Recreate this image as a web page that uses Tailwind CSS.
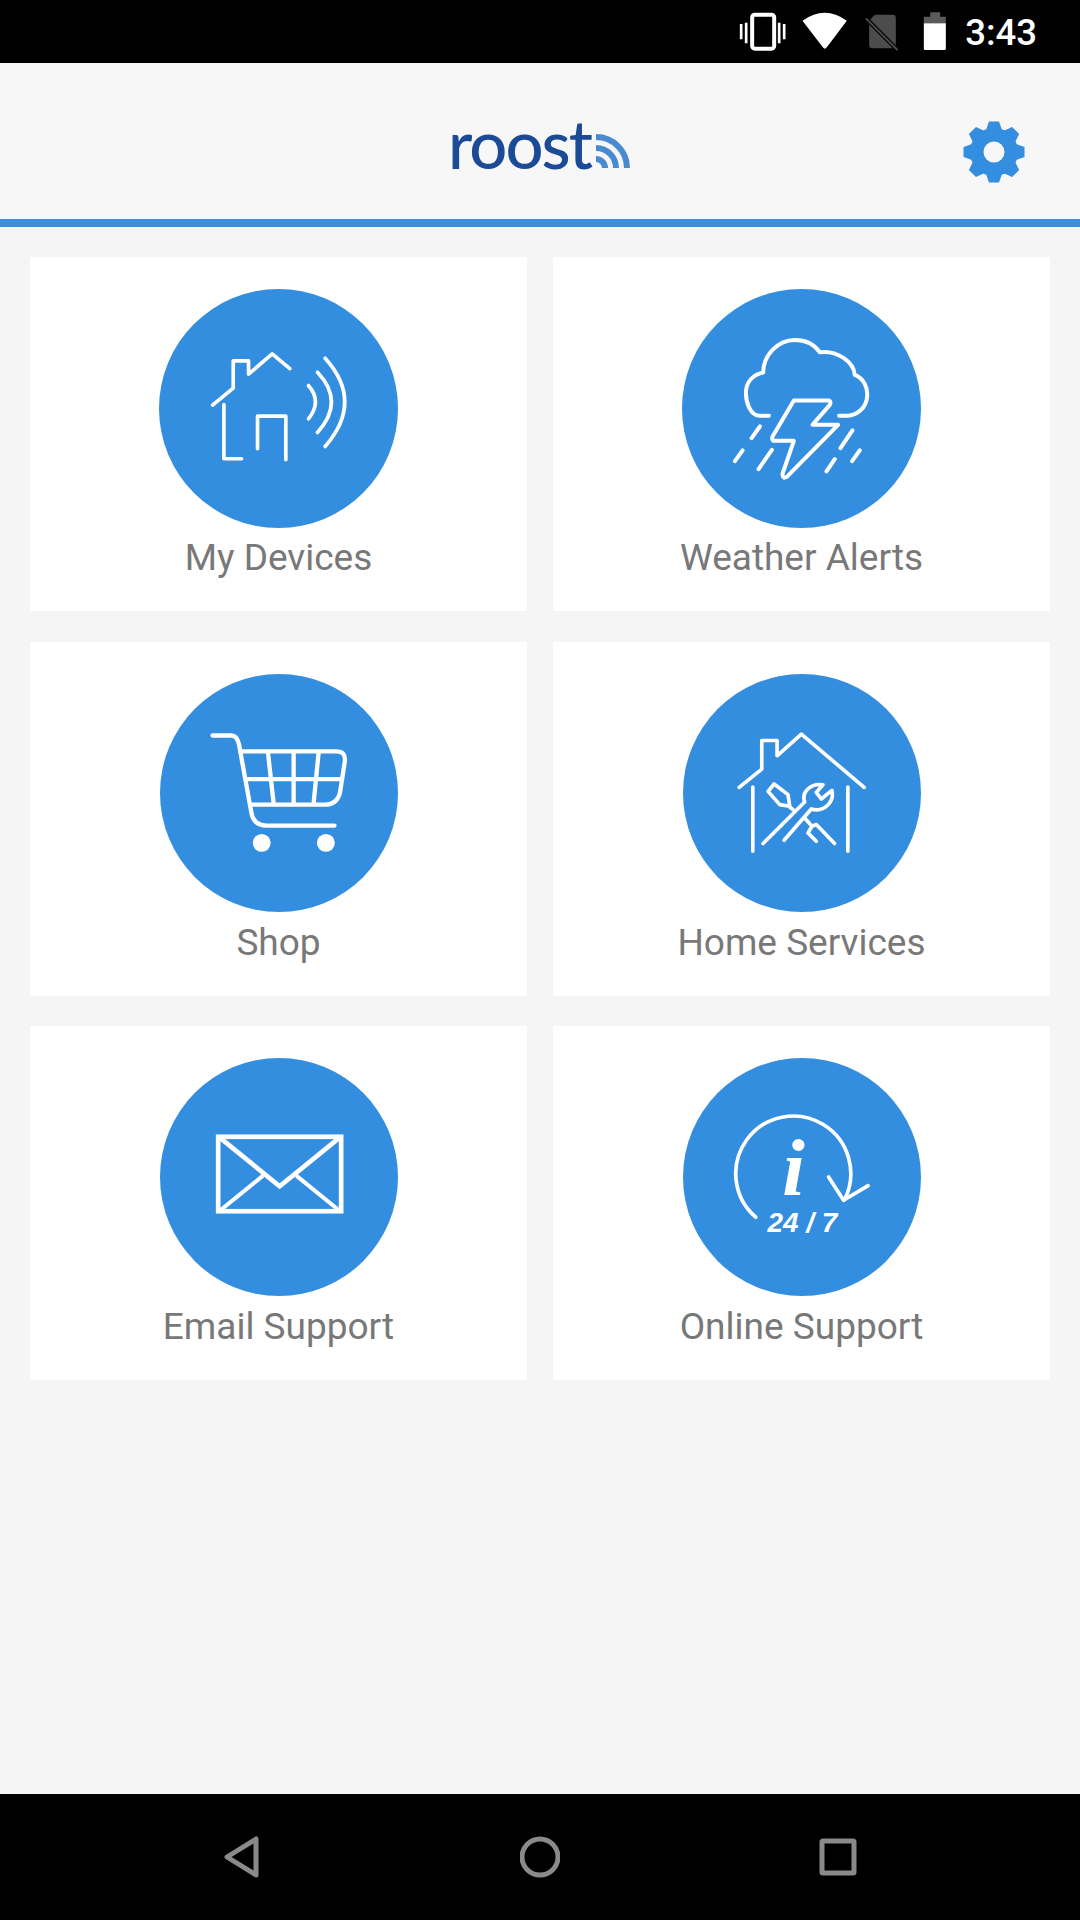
<!DOCTYPE html>
<html>
<head>
<meta charset="utf-8">
<script src="https://cdn.jsdelivr.net/npm/@tailwindcss/browser@4"></script>
</head>
<body class="m-0">
<div class="w-[1080px] h-[1920px] flex flex-col bg-[#f5f5f6] font-['Roboto',sans-serif] overflow-hidden">
  <div class="h-[63px] bg-black flex justify-end items-center shrink-0">
    <svg class="block" width="217" height="63" viewBox="100 0 650 189">
      <g fill="none" stroke="#fff">
        <rect x="154" y="44" width="66" height="102" rx="8" stroke-width="12"/>
        <path d="M121 72V118M136 68V130M235 68V130M250 72V118" stroke-width="8"/>
      </g>
      <path d="M305 62Q372 14 438 62L378 142Q372 150 366 142Z" fill="#fff"/>
      <path d="M522 44H575Q585 44 585 54V145H515Q505 145 505 135V62Z" fill="#4c4c4c"/>
      <path d="M495 55L590 150" stroke="#000" stroke-width="13"/>
      <path d="M495 55L590 150" stroke="#4c4c4c" stroke-width="6"/>
      <path d="M688 50V37H718V50H735V70H669V50Z" fill="#5a5a5a"/>
      <path d="M669 70H735V146Q735 150 731 150H673Q669 150 669 146Z" fill="#fff"/>
    </svg>
    <span class="text-[36.5px] leading-none font-medium text-white ml-[14px] mr-[43px] mt-[3px]">3:43</span>
  </div>
  <header class="h-[156px] bg-[#f7f7f7] flex items-center relative shrink-0">
    <div class="absolute left-[448px] top-[40px] flex items-end">
      <span class="text-[#1b4a97] font-['Lato',sans-serif] font-medium text-[67px] leading-[80px] tracking-[-2px]">roost</span>
    </div>
    <svg class="absolute left-[596px] top-[71px]" width="35" height="34" viewBox="0 0 35 34" fill="none" stroke="#4a8ad0" stroke-width="6">
      <path d="M0 3A31 31 0 0 1 31 34"/>
      <path d="M0 14A20 20 0 0 1 20 34"/>
      <path d="M0 25A9 9 0 0 1 9 34"/>
    </svg>
    <svg class="absolute left-[963px] top-[58px]" width="62" height="62" viewBox="-31 -31 62 62" fill="#338ee0">
      <path fill-rule="evenodd" d="M0-24A24 24 0 1 1 0 24A24 24 0 1 1 0-24ZM0-10.5A10.5 10.5 0 1 0 0 10.5A10.5 10.5 0 1 0 0-10.5Z"/>
      <polygon points="-8,-22 -5,-30.5 5,-30.5 8,-22"/>
      <polygon points="-8,-22 -5,-30.5 5,-30.5 8,-22" transform="rotate(45)"/>
      <polygon points="-8,-22 -5,-30.5 5,-30.5 8,-22" transform="rotate(90)"/>
      <polygon points="-8,-22 -5,-30.5 5,-30.5 8,-22" transform="rotate(135)"/>
      <polygon points="-8,-22 -5,-30.5 5,-30.5 8,-22" transform="rotate(180)"/>
      <polygon points="-8,-22 -5,-30.5 5,-30.5 8,-22" transform="rotate(225)"/>
      <polygon points="-8,-22 -5,-30.5 5,-30.5 8,-22" transform="rotate(270)"/>
      <polygon points="-8,-22 -5,-30.5 5,-30.5 8,-22" transform="rotate(315)"/>
    </svg>
  </header>
  <div class="h-[8px] bg-[#3a8fdc] shrink-0"></div>
  <main class="flex-1 grid grid-cols-[497px_497px] gap-x-[26px] gap-y-[30.5px] content-start pl-[30px] pt-[30px]">
    <a class="h-[354px] bg-white flex flex-col items-center pt-[32px]">
      <svg class="block w-[239px] h-[239px] rounded-full bg-[#338ee0]" viewBox="27 27 718 718" fill="none" stroke="#fff" stroke-width="11" stroke-linecap="round" stroke-linejoin="round">
        <path d="M188 376L250 325V243H296V283L367 222L420 266"/>
        <path d="M222 374V537H275"/>
        <path d="M323 507V409H408V540"/>
        <path d="M476 317Q518 365 476 417"/>
        <path d="M503 277Q587 365 503 458"/>
        <path d="M526 235Q644 365 526 500"/>
      </svg>
      <span class="text-[37px] leading-[42px] text-[#787878] mt-[9px]">My Devices</span>
    </a>
    <a class="h-[354px] bg-white flex flex-col items-center pt-[32px]">
      <svg class="block w-[239px] h-[239px] rounded-full bg-[#338ee0]" viewBox="36 27 718 718" fill="none" stroke="#fff" stroke-width="12" stroke-linecap="round" stroke-linejoin="round">
        <path d="M297 408H270C240 408 228 365 228 340C228 305 250 285 280 278C280 225 325 180 375 180C410 180 435 195 450 217C500 210 552 245 555 285C580 295 595 320 592 350C590 385 560 408 530 408H508"/>
        <path d="M372 362H478Q485 365 480 375L428 435H505L350 592Q338 598 338 582L372 483H310Q305 478 308 470Z"/>
        <path d="M245 475L270 440M195 544L218 512M266 568L306 510M512 505L548 452M470 575L495 538M547 544L570 512"/>
      </svg>
      <span class="text-[37px] leading-[42px] text-[#787878] mt-[9px]">Weather Alerts</span>
    </a>
    <a class="h-[354px] bg-white flex flex-col items-center pt-[32px]">
      <svg class="block w-[238px] h-[238px] rounded-full bg-[#338ee0]" viewBox="30 12 716 716" fill="none" stroke="#fff" stroke-width="13" stroke-linecap="round" stroke-linejoin="round">
        <path d="M188 197H245Q262 197 268 225L305 430Q312 468 350 468H555"/>
        <path d="M272 245H560Q590 245 586 275L572 365Q565 405 525 405H305"/>
        <path d="M288 328H578M355 250L372 402M432 250V402M507 250L492 402"/>
        <circle cx="336" cy="520" r="27" fill="#fff" stroke="none"/>
        <circle cx="529" cy="520" r="27" fill="#fff" stroke="none"/>
      </svg>
      <span class="text-[37px] leading-[42px] text-[#787878] mt-[10px]">Shop</span>
    </a>
    <a class="h-[354px] bg-white flex flex-col items-center pt-[32px]">
      <svg class="block w-[238px] h-[238px] rounded-full bg-[#338ee0]" viewBox="39 12 716 716" fill="none" stroke="#fff" stroke-width="11" stroke-linecap="round" stroke-linejoin="round">
        <path d="M208 353L276 298V212H322V258L395 193L584 353"/>
        <path d="M249 352V545M535 352V545"/>
        <path d="M280 522L405 397C395 370 420 340 460 345L440 368L455 388L487 362C495 395 465 430 425 418L343 512"/>
        <path d="M295 365L313 343L355 375L360 410L330 405Z"/>
        <path d="M360 412L370 420M405 445L427 470L440 465L495 522M427 470L415 490L440 515"/>
      </svg>
      <span class="text-[37px] leading-[42px] text-[#787878] mt-[10px]">Home Services</span>
    </a>
    <a class="h-[354px] bg-white flex flex-col items-center pt-[32px]">
      <svg class="block w-[238px] h-[238px] rounded-full bg-[#338ee0]" viewBox="30 24 716 716" fill="none" stroke="#fff" stroke-width="14">
        <rect x="205" y="261" width="370" height="224"/>
        <path d="M208 262L390 410L572 262"/>
        <path d="M208 485L340 378M572 485L440 378" stroke-width="12"/>
      </svg>
      <span class="text-[37px] leading-[42px] text-[#787878] mt-[10px]">Email Support</span>
    </a>
    <a class="h-[354px] bg-white flex flex-col items-center pt-[32px]">
      <svg class="block w-[238px] h-[238px] rounded-full bg-[#338ee0]" viewBox="39 24 716 716" fill="none" stroke="#fff" stroke-width="11" stroke-linecap="round" stroke-linejoin="round">
        <path d="M258 503A173 173 0 1 1 525 450"/>
        <path d="M477 382L522 452L596 408"/>
        <text x="372" y="437" text-anchor="middle" fill="#fff" stroke="none" font-family="Liberation Serif" font-weight="700" font-style="italic" font-size="245">i</text>
        <text x="398" y="547" text-anchor="middle" fill="#fff" stroke="none" font-family="Liberation Sans" font-weight="700" font-style="italic" font-size="84">24 / 7</text>
      </svg>
      <span class="text-[37px] leading-[42px] text-[#787878] mt-[10px]">Online Support</span>
    </a>
  </main>
  <nav class="h-[126px] bg-black flex justify-between items-center px-[221px] shrink-0">
    <svg class="block" width="40" height="44" viewBox="0 0 40 44" fill="none" stroke="#8a8a8a" stroke-width="5" stroke-linejoin="round"><path d="M6 22L35 4V40Z"/></svg>
    <svg class="block" width="40" height="44" viewBox="0 0 40 44" fill="none" stroke="#8a8a8a" stroke-width="5"><circle cx="20" cy="22" r="18"/></svg>
    <svg class="block" width="40" height="44" viewBox="0 0 40 44" fill="none" stroke="#8a8a8a" stroke-width="5" stroke-linejoin="round"><rect x="3" y="6" width="32" height="32" rx="1"/></svg>
  </nav>
</div>
</body>
</html>
